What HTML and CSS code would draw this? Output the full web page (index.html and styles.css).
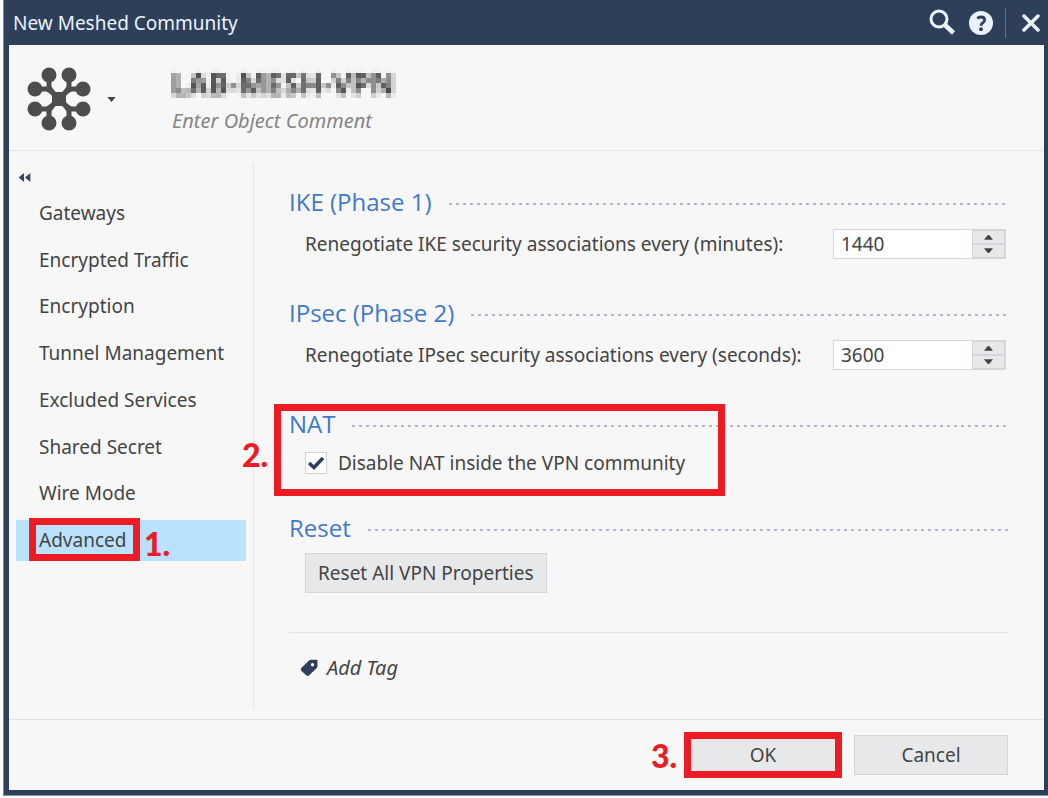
FILE: index.html
```html
<!DOCTYPE html>
<html lang="en">
<head>
<meta charset="utf-8">
<title>New Meshed Community</title>
<link rel="stylesheet" href="styles.css">
</head>
<body>
<svg class="defs" aria-hidden="true">
  <filter id="mosaic" filterUnits="userSpaceOnUse" x="0" y="0" width="1000" height="40" color-interpolation-filters="sRGB">
    <feGaussianBlur in="SourceGraphic" stdDeviation="1.5" result="soft"/>
    <feFlood x="2" y="2" width="1" height="1" flood-color="#000" result="dot"/>
    <feOffset in="dot" x="0" y="0" width="5" height="5"/>
    <feTile result="grid"/>
    <feComposite in="soft" in2="grid" operator="in"/>
    <feMorphology operator="dilate" radius="2"/>
  </filter>
</svg>
<div class="window">
  <header class="titlebar">
    <h1 class="titlebar-text">New Meshed Community</h1>
    <button class="title-btn" type="button" aria-label="Search">
      <svg width="28" height="28" viewBox="0 0 28 28"><circle cx="10" cy="10" r="8" fill="none" stroke="#eaf2ff" stroke-width="3"/><path d="M15.500 15.500L24.500 24" stroke="#eaf2ff" stroke-width="4.500"/></svg>
    </button>
    <button class="title-btn" type="button" aria-label="Help">
      <svg width="24" height="24" viewBox="0 0 24 24"><circle cx="12" cy="12" r="12" fill="#eaf2ff"/><path d="M8.300 7.500Q9.800 6 12 6Q15.600 6 15.600 9Q15.600 10.700 13.700 11.900Q12 13 12 14.700" fill="none" stroke="#2e4059" stroke-width="2.800"/><circle cx="12" cy="18.200" r="1.900" fill="#2e4059"/></svg>
    </button>
    <span class="title-sep"></span>
    <button class="title-btn" type="button" aria-label="Close">
      <svg width="18" height="18" viewBox="0 0 18 18"><path d="M2 2L16 16M16 2L2 16" stroke="#eaf2ff" stroke-width="3.500" stroke-linecap="round"/></svg>
    </button>
  </header>

  <div class="object">
    <button class="object-icon" type="button" aria-label="Object icon">
      <svg width="64" height="64" viewBox="0 0 64 64">
        <g fill="none" stroke="#4d4d4d" stroke-width="5"><path d="M22 8V19Q22 22 32 32Q22 42 22 45V56M42 8V19Q42 22 32 32Q42 42 42 45V56M8 22H19Q22 22 32 32Q22 42 19 42H8M56 22H45Q42 22 32 32Q42 42 45 42H56"/></g>
        <g fill="#4d4d4d"><rect x="25" y="25" width="14" height="14" rx="2"/><circle cx="22" cy="8" r="7.500"/><circle cx="42" cy="8" r="7.500"/><circle cx="8" cy="22" r="7.500"/><circle cx="56" cy="22" r="7.500"/><circle cx="8" cy="42" r="7.500"/><circle cx="56" cy="42" r="7.500"/><circle cx="22" cy="56" r="7.500"/><circle cx="42" cy="56" r="7.500"/></g>
      </svg>
      <svg width="9" height="5" viewBox="0 0 10 6"><path d="M0 0H10L5 6Z" fill="#444"/></svg>
    </button>
    <div class="object-fields">
      <input class="object-name" type="text" value="LAB-MESH-VPN" aria-label="Object name">
      <input class="object-comment" type="text" placeholder="Enter Object Comment" aria-label="Object comment">
    </div>
  </div>

  <div class="body">
    <nav class="sidebar">
      <button class="collapse" type="button" aria-label="Collapse"><svg width="13" height="9" viewBox="0 0 13 10"><path d="M6 0V10L0 5ZM13 0V10L7 5Z" fill="#35475f"/></svg></button>
      <div class="nav-list">
        <a class="nav-item" href="#gateways">Gateways</a>
        <a class="nav-item" href="#traffic">Encrypted Traffic</a>
        <a class="nav-item" href="#encryption">Encryption</a>
        <a class="nav-item" href="#tunnel">Tunnel Management</a>
        <a class="nav-item" href="#excluded">Excluded Services</a>
        <a class="nav-item" href="#secret">Shared Secret</a>
        <a class="nav-item" href="#wire">Wire Mode</a>
        <a class="nav-item active" href="#advanced"><span class="marked marked-nav">Advanced<span class="step step-nav">1.</span></span></a>
      </div>
    </nav>

    <main class="content">
      <section class="section">
        <h2 class="heading">IKE (Phase 1)</h2>
        <div class="row">
          <label for="ike">Renegotiate IKE security associations every (minutes):</label>
          <div class="spinner">
            <input id="ike" class="spinner-input" type="number" value="1440">
            <div class="spinner-buttons">
              <button class="spin" type="button" aria-label="Increase minutes"><svg width="9" height="6" viewBox="0 0 10 6"><path d="M0 6L3.500 1.500Q5 0 6.500 1.500L10 6Z" fill="#444"/></svg></button>
              <button class="spin" type="button" aria-label="Decrease minutes"><svg width="9" height="6" viewBox="0 0 10 6"><path d="M0 0L3.500 4.500Q5 6 6.500 4.500L10 0Z" fill="#444"/></svg></button>
            </div>
          </div>
        </div>
      </section>
      <section class="section">
        <h2 class="heading">IPsec (Phase 2)</h2>
        <div class="row">
          <label for="ipsec">Renegotiate IPsec security associations every (seconds):</label>
          <div class="spinner">
            <input id="ipsec" class="spinner-input" type="number" value="3600">
            <div class="spinner-buttons">
              <button class="spin" type="button" aria-label="Increase seconds"><svg width="9" height="6" viewBox="0 0 10 6"><path d="M0 6L3.500 1.500Q5 0 6.500 1.500L10 6Z" fill="#444"/></svg></button>
              <button class="spin" type="button" aria-label="Decrease seconds"><svg width="9" height="6" viewBox="0 0 10 6"><path d="M0 0L3.500 4.500Q5 6 6.500 4.500L10 0Z" fill="#444"/></svg></button>
            </div>
          </div>
        </div>
      </section>
      <section class="section marked marked-nat">
        <h2 class="heading">NAT</h2>
        <div class="check-row">
          <input id="nat" class="check" type="checkbox" checked>
          <label for="nat">Disable NAT inside the VPN community</label>
        </div>
        <span class="step step-nat">2.</span>
      </section>
      <section class="section section-last">
        <h2 class="heading heading-tight">Reset</h2>
        <button class="btn btn-reset" type="button">Reset All VPN Properties</button>
      </section>
      <button class="add-tag" type="button">
        <svg width="18" height="18" viewBox="0 0 18 18"><path fill-rule="evenodd" d="M9 1.500Q10 .8 11 .8H16.500Q17.500 .8 17.500 2V7Q17.500 8 16.700 9L9.500 16Q8 17.500 6.500 16.500L1.500 12Q0 10.500 1.300 9ZM12.500 4A1.700 1.700 0 1 0 12.500 7.400A1.700 1.700 0 1 0 12.500 4Z" fill="#2e4059"/></svg>
        Add Tag
      </button>
    </main>
  </div>

  <footer class="footer">
    <div class="marked marked-ok"><button class="btn btn-footer" type="button">OK</button><span class="step step-ok">3.</span></div>
    <button class="btn btn-footer" type="button">Cancel</button>
  </footer>
</div>
</body>
</html>
```
FILE: styles.css
```css
*, *::before, *::after { box-sizing: border-box; }
body {
  margin: 0;
  padding: 0 0 2px 3px;
  min-height: 100vh;
  display: flex;
  background: #fff;
  color: #444;
  font: 19px/26px "Noto Sans", "Open Sans", sans-serif;
}
button, input { font: inherit; color: inherit; margin: 0; }
button { padding: 0; border: 0; background: none; }
svg { display: block; flex: none; }
.defs { position: absolute; width: 0; height: 0; }

.window {
  flex: 1;
  display: flex;
  flex-direction: column;
  padding: 0 4px 5px 5px;
  border-left: 1px solid #7d8794;
  border-bottom: 1px solid #8a919b;
  background: #2e4059;
}
.titlebar {
  height: 45px;
  display: flex;
  align-items: center;
  gap: 12px;
  padding: 0 4px;
  color: #eaf2ff;
}
.titlebar-text { flex: 1; margin: 0; font-size: 19px; font-weight: 400; }
.title-sep { width: 1px; height: 30px; background: #64748a; }
.title-sep + .title-btn { margin-left: 4px; }

.object {
  display: flex;
  align-items: center;
  padding: 14px 20px 11px 18px;
  height: 106px;
  background: #f7f7f7;
  border-bottom: 1px solid #e2e5e8;
}
.object-icon { display: flex; align-items: center; gap: 16px; width: 144px; }
.object-fields { flex: 1; display: flex; flex-direction: column; gap: 2px; }
.object-name, .object-comment { width: 100%; border: 0; padding: 0; background: none; }
.object-name { height: 40px; font-size: 30px; font-weight: 700; filter: url(#mosaic); }
.object-comment { height: 30px; padding-left: 1px; font-size: 20px; font-style: italic; }
.object-comment::placeholder { color: #858585; opacity: 1; }

.body { flex: 1; display: flex; background: #f7f7f7; padding: 12px 36px 11px 7px; }
.sidebar {
  width: 238px;
  display: flex;
  flex-direction: column;
  padding: 10px 7px 0 0;
  border-right: 1px solid #e2e4e7;
}
.collapse { height: 9px; padding-left: 2px; align-self: flex-start; }
.nav-list {
  flex: 1;
  display: flex;
  flex-direction: column;
  justify-content: space-between;
  margin: 11px 0 147px;
}
.nav-item { padding: 7px 8px 7px 23px; line-height: 27px; color: inherit; text-decoration: none; }
.active { background: #bae2fe; }

.content { flex: 1; padding: 23px 0 0 35px; }
.section { margin-bottom: 38px; }
.heading {
  display: flex;
  align-items: center;
  gap: 17px;
  margin: 0 0 11px;
  font-family: "Open Sans", "Noto Sans", sans-serif;
  font-size: 24px;
  line-height: 32px;
  font-weight: 400;
  color: #4179ca;
}
.heading::after {
  content: "";
  flex: 1;
  height: 2px;
  margin-top: 4px;
  background: repeating-linear-gradient(90deg, #b0b8cb 0 3px, transparent 3px 7px);
}
.heading-tight { margin-bottom: 9px; }
.row { display: flex; align-items: center; justify-content: space-between; padding: 0 2px 0 16px; }
.spinner { display: flex; width: 173px; height: 30px; border: 1px solid #d4d7db; background: #fff; }
.spinner-input {
  flex: 1;
  min-width: 0;
  border: 0;
  padding: 0 7px;
  background: none;
  appearance: textfield;
  -moz-appearance: textfield;
}
.spinner-input::-webkit-inner-spin-button { appearance: none; -webkit-appearance: none; margin: 0; }
.spinner-buttons { width: 33px; display: flex; flex-direction: column; }
.spin {
  flex: 1;
  display: flex;
  align-items: center;
  justify-content: center;
  border: 1px solid #d2d5da;
  background: #e7e8ea;
}
.check-row { display: flex; align-items: center; gap: 11px; height: 23px; padding-left: 16px; }
.check {
  appearance: none;
  -webkit-appearance: none;
  width: 22px;
  height: 22px;
  border: 1px solid #d0d4d9;
  background: #fff;
}
.check:checked {
  background: #fff url("data:image/svg+xml,%3Csvg xmlns='http://www.w3.org/2000/svg' viewBox='0 0 20 20'%3E%3Cpath d='M3 10L8 14.500L17 5' fill='none' stroke='%232e4059' stroke-width='3.500'/%3E%3C/svg%3E") center / 20px 20px no-repeat;
}
.btn { height: 40px; border: 1px solid #d2d5da; background: #e7e8ea; }
.btn-reset { margin-left: 16px; padding: 0 12px; }
.section-last { margin: 0; padding-bottom: 39px; border-bottom: 1px solid #e2e4e7; }
.add-tag { display: flex; align-items: center; gap: 9px; margin: 22px 0 0 11px; font-size: 20px; font-style: italic; }

.footer {
  display: flex;
  justify-content: flex-end;
  gap: 14px;
  padding: 15px 36px 15px;
  background: #f7f7f7;
  border-top: 1px solid #e0e4e6;
}
.btn-footer { width: 154px; }

/* Red walkthrough annotations */
.marked { position: relative; }
.marked::after { content: ""; position: absolute; border: 7px solid #ed1c24; pointer-events: none; }
.marked-nav::after { inset: -9px -14px -8px -10px; }
.marked-nat::after { left: -15px; width: 451px; top: -4px; bottom: -22px; }
.marked-ok::after { inset: -3px -2px; }
.step { position: absolute; color: #ed1c24; font: 900 32px/32px Lato, "Open Sans", sans-serif; }
.step-nav { left: 105px; top: 1px; }
.step-nat { left: -47px; top: 31px; }
.step-ok { left: -35px; top: 5px; }
```
